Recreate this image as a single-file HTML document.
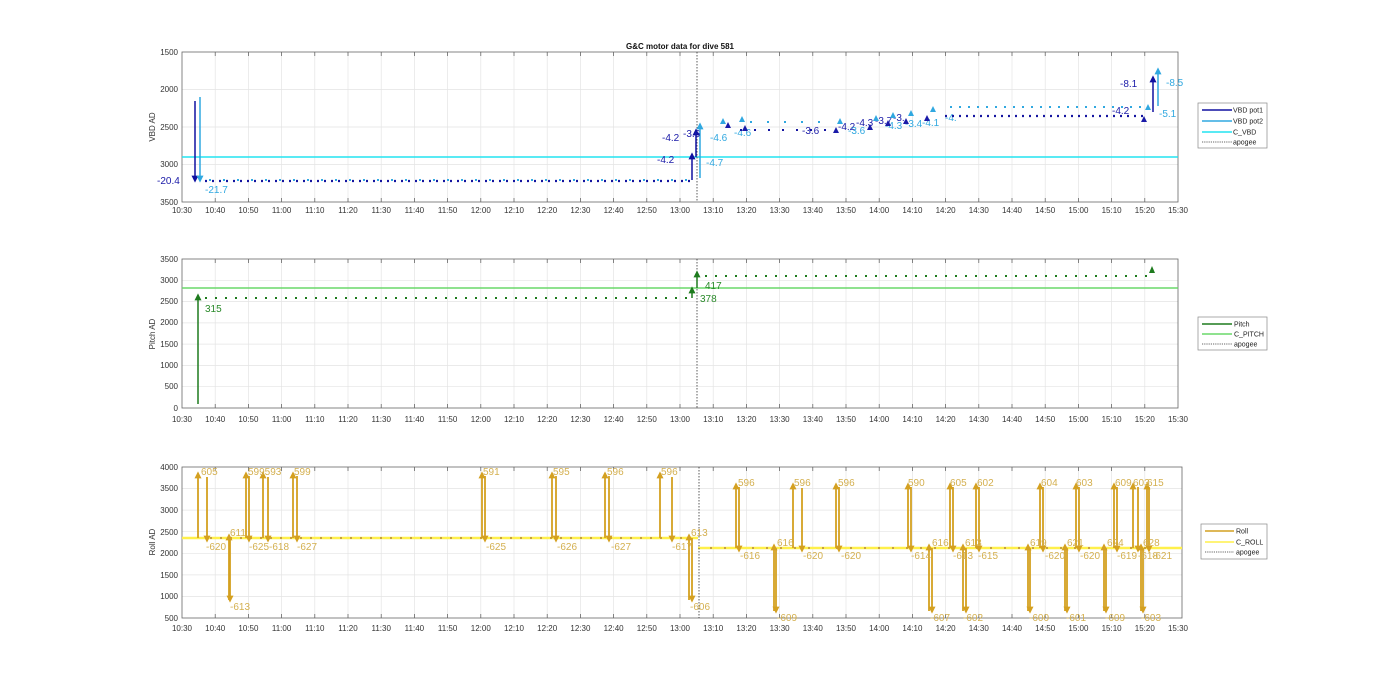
<!DOCTYPE html>
<html><head><meta charset="utf-8"><style>
html,body{margin:0;padding:0;background:#fff;}
svg{display:block;font-family:"Liberation Sans",Arial,sans-serif;}
</style></head><body>
<svg width="1400" height="693" viewBox="0 0 1400 693" xmlns="http://www.w3.org/2000/svg">
<defs>
<marker id="mdb" markerUnits="userSpaceOnUse" markerWidth="7" markerHeight="7" refX="5" refY="4" orient="auto-start-reverse" viewBox="0 0 8 8"><path d="M0,0 L8,4 L0,8Z" fill="#1010a0"/></marker>
<marker id="mlb" markerUnits="userSpaceOnUse" markerWidth="7" markerHeight="7" refX="5" refY="4" orient="auto-start-reverse" viewBox="0 0 8 8"><path d="M0,0 L8,4 L0,8Z" fill="#30a8e0"/></marker>
<marker id="mg" markerUnits="userSpaceOnUse" markerWidth="7" markerHeight="7" refX="5" refY="4" orient="auto-start-reverse" viewBox="0 0 8 8"><path d="M0,0 L8,4 L0,8Z" fill="#1e7b1e"/></marker>
<marker id="mo" markerUnits="userSpaceOnUse" markerWidth="7" markerHeight="7" refX="5" refY="4" orient="auto-start-reverse" viewBox="0 0 8 8"><path d="M0,0 L8,4 L0,8Z" fill="#d4a020"/></marker>
<g id="xl" font-size="8" fill="#333" text-anchor="middle">
<text x="182" y="0">10:30</text><text x="215.2" y="0">10:40</text><text x="248.4" y="0">10:50</text><text x="281.6" y="0">11:00</text><text x="314.8" y="0">11:10</text><text x="348" y="0">11:20</text><text x="381.2" y="0">11:30</text><text x="414.4" y="0">11:40</text><text x="447.6" y="0">11:50</text><text x="480.8" y="0">12:00</text><text x="514" y="0">12:10</text><text x="547.2" y="0">12:20</text><text x="580.4" y="0">12:30</text><text x="613.6" y="0">12:40</text><text x="646.8" y="0">12:50</text><text x="680" y="0">13:00</text><text x="713.2" y="0">13:10</text><text x="746.4" y="0">13:20</text><text x="779.6" y="0">13:30</text><text x="812.8" y="0">13:40</text><text x="846" y="0">13:50</text><text x="879.2" y="0">14:00</text><text x="912.4" y="0">14:10</text><text x="945.6" y="0">14:20</text><text x="978.8" y="0">14:30</text><text x="1012" y="0">14:40</text><text x="1045.2" y="0">14:50</text><text x="1078.4" y="0">15:00</text><text x="1111.6" y="0">15:10</text><text x="1144.8" y="0">15:20</text><text x="1178" y="0">15:30</text>
</g>
<path id="vg" d="M215.2 0v1M248.4 0v1M281.6 0v1M314.8 0v1M348 0v1M381.2 0v1M414.4 0v1M447.6 0v1M480.8 0v1M514 0v1M547.2 0v1M580.4 0v1M613.6 0v1M646.8 0v1M680 0v1M713.2 0v1M746.4 0v1M779.6 0v1M812.8 0v1M846 0v1M879.2 0v1M912.4 0v1M945.6 0v1M978.8 0v1M1012 0v1M1045.2 0v1M1078.4 0v1M1111.6 0v1M1144.8 0v1"/>
</defs>

<text x="680" y="49" font-size="8" font-weight="bold" text-anchor="middle" fill="#111">G&amp;C motor data for dive 581</text>

<!-- ===== Plot 1 ===== -->
<use href="#vg" transform="translate(0,52) scale(1,150)" stroke="#e4e4e4" stroke-width="0.7" vector-effect="non-scaling-stroke"/>
<path d="M182 89.5H1178M182 127H1178M182 164.5H1178" stroke="#e4e4e4" stroke-width="0.7"/>
<use href="#vg" transform="translate(0,52) scale(1,4)" stroke="#555" stroke-width="0.7"/>
<use href="#vg" transform="translate(0,198) scale(1,4)" stroke="#555" stroke-width="0.7"/>
<rect x="182" y="52" width="996" height="150" fill="none" stroke="#666" stroke-width="0.8"/>
<g font-size="8" fill="#333" text-anchor="end">
<text x="178" y="55">1500</text><text x="178" y="92">2000</text><text x="178" y="130">2500</text><text x="178" y="167">3000</text><text x="178" y="205">3500</text></g>
<use href="#xl" transform="translate(0,213)"/>
<text transform="translate(155,127) rotate(-90)" font-size="8" fill="#333" text-anchor="middle">VBD AD</text>
<line x1="182" y1="157" x2="1178" y2="157" stroke="#22e4f0" stroke-width="1.5"/>
<line x1="697" y1="52" x2="697" y2="202" stroke="#333" stroke-width="0.8" stroke-dasharray="1.5 1.5"/>
<line x1="205" y1="181" x2="692" y2="181" stroke="#1515a0" stroke-width="2.2" stroke-dasharray="2 5"/>
<line x1="209" y1="180" x2="692" y2="180" stroke="#30a8e0" stroke-width="2" stroke-dasharray="2 12"/>
<line x1="195" y1="101" x2="195" y2="180" stroke="#1010a0" stroke-width="1.5" marker-end="url(#mdb)"/>
<line x1="200" y1="97" x2="200" y2="180" stroke="#30a8e0" stroke-width="1.5" marker-end="url(#mlb)"/>
<text x="157" y="184" font-size="10" fill="#1a1aa8">-20.4</text>
<text x="205" y="193" font-size="10" fill="#30a8e0">-21.7</text>
<line x1="692" y1="180" x2="692" y2="155" stroke="#1010a0" stroke-width="1.5" marker-end="url(#mdb)"/>
<line x1="696" y1="157" x2="696" y2="131" stroke="#1010a0" stroke-width="1.5" marker-end="url(#mdb)"/>
<line x1="700" y1="178" x2="700" y2="125" stroke="#30a8e0" stroke-width="1.5" marker-end="url(#mlb)"/>
<text x="657" y="163" font-size="10" fill="#1a1aa8">-4.2</text>
<text x="662" y="141" font-size="10" fill="#1a1aa8">-4.2</text>
<text x="683" y="137" font-size="10" fill="#1a1aa8">-3.6</text>
<text x="706" y="166" font-size="10" fill="#30a8e0">-4.7</text>
<text x="710" y="141" font-size="10" fill="#30a8e0">-4.6</text>
<text x="734" y="136" font-size="10" fill="#30a8e0">-4.6</text>
<text x="802" y="134" font-size="10" fill="#1a1aa8">-3.6</text>
<text x="838" y="130" font-size="10" fill="#1a1aa8">-4.2</text>
<text x="848" y="134" font-size="10" fill="#30a8e0">-3.6</text>
<text x="856" y="126" font-size="10" fill="#1a1aa8">-4.3</text>
<text x="875" y="124" font-size="10" fill="#1a1aa8">-3.7</text>
<text x="885" y="129" font-size="10" fill="#30a8e0">-4.3</text>
<text x="893" y="121" font-size="10" fill="#1a1aa8">-3.</text>
<text x="905" y="127" font-size="10" fill="#30a8e0">-3.4</text>
<text x="922" y="126" font-size="10" fill="#30a8e0">-4.1</text>
<text x="945" y="121" font-size="10" fill="#30a8e0">-4.</text>
<g fill="#1a1aa8"><path d="M725 128l3 -6l3 6z M742 131l3 -6l3 6z M833 133l3 -6l3 6z M867 130l3 -6l3 6z M885 126l3 -6l3 6z M903 124l3 -6l3 6z M924 121l3 -6l3 6z M1141 122l3 -6l3 6z"/></g>
<g fill="#30a8e0"><path d="M720 124l3 -6l3 6z M739 122l3 -6l3 6z M837 124l3 -6l3 6z M873 121l3 -6l3 6z M890 118l3 -6l3 6z M908 116l3 -6l3 6z M930 112l3 -6l3 6z M1145 110l3 -6l3 6z"/></g>
<line x1="740" y1="130" x2="830" y2="130" stroke="#1515a0" stroke-width="2" stroke-dasharray="2 12"/>
<line x1="750" y1="122" x2="830" y2="122" stroke="#30a8e0" stroke-width="2" stroke-dasharray="2 15"/>
<line x1="945" y1="116" x2="1145" y2="116" stroke="#1515a0" stroke-width="2.2" stroke-dasharray="2 5"/>
<line x1="950" y1="107" x2="1145" y2="107" stroke="#30a8e0" stroke-width="2" stroke-dasharray="2 7"/>
<line x1="1153" y1="112" x2="1153" y2="78" stroke="#1010a0" stroke-width="1.5" marker-end="url(#mdb)"/>
<line x1="1158" y1="106" x2="1158" y2="70" stroke="#30a8e0" stroke-width="1.5" marker-end="url(#mlb)"/>
<text x="1120" y="87" font-size="10" fill="#1a1aa8">-8.1</text>
<text x="1166" y="86" font-size="10" fill="#30a8e0">-8.5</text>
<text x="1159" y="117" font-size="10" fill="#30a8e0">-5.1</text>
<text x="1112" y="114" font-size="10" fill="#1a1aa8">-4.2</text>
<rect x="1198" y="103" width="69" height="45" fill="#fff" stroke="#888" stroke-width="0.7"/>
<g font-size="7" fill="#222">
<line x1="1202" y1="110" x2="1232" y2="110" stroke="#1010a0" stroke-width="1.5"/><text x="1233" y="112.5">VBD pot1</text>
<line x1="1202" y1="121" x2="1232" y2="121" stroke="#30a8e0" stroke-width="1.5"/><text x="1233" y="123.5">VBD pot2</text>
<line x1="1202" y1="132" x2="1232" y2="132" stroke="#22e4f0" stroke-width="1.5"/><text x="1233" y="134.5">C_VBD</text>
<line x1="1202" y1="142" x2="1232" y2="142" stroke="#333" stroke-width="0.7" stroke-dasharray="1.2 1"/><text x="1233" y="144.5">apogee</text></g>

<!-- ===== Plot 2 ===== -->
<use href="#vg" transform="translate(0,259) scale(1,149)" stroke="#e4e4e4" stroke-width="0.7" vector-effect="non-scaling-stroke"/>
<path d="M182 386.7H1178M182 365.4H1178M182 344.1H1178M182 322.9H1178M182 301.6H1178M182 280.3H1178" stroke="#e4e4e4" stroke-width="0.7"/>
<use href="#vg" transform="translate(0,259) scale(1,4)" stroke="#555" stroke-width="0.7"/>
<use href="#vg" transform="translate(0,404) scale(1,4)" stroke="#555" stroke-width="0.7"/>
<rect x="182" y="259" width="996" height="149" fill="none" stroke="#666" stroke-width="0.8"/>
<g font-size="8" fill="#333" text-anchor="end">
<text x="178" y="262">3500</text><text x="178" y="283">3000</text><text x="178" y="304">2500</text><text x="178" y="325">2000</text><text x="178" y="347">1500</text><text x="178" y="368">1000</text><text x="178" y="389">500</text><text x="178" y="411">0</text></g>
<use href="#xl" transform="translate(0,422)"/>
<text transform="translate(155,334) rotate(-90)" font-size="8" fill="#333" text-anchor="middle">Pitch AD</text>
<line x1="182" y1="288" x2="1178" y2="288" stroke="#6ad86a" stroke-width="1.5"/>
<line x1="697" y1="259" x2="697" y2="408" stroke="#333" stroke-width="0.8" stroke-dasharray="1.5 1.5"/>
<line x1="205" y1="298" x2="690" y2="298" stroke="#1e7b1e" stroke-width="2" stroke-dasharray="2 8"/>
<line x1="705" y1="276" x2="1150" y2="276" stroke="#1e7b1e" stroke-width="2" stroke-dasharray="2 8"/>
<line x1="198" y1="404" x2="198" y2="296" stroke="#1e7b1e" stroke-width="1.5" marker-end="url(#mg)"/>
<line x1="692" y1="298" x2="692" y2="289" stroke="#1e7b1e" stroke-width="1.5" marker-end="url(#mg)"/>
<line x1="697" y1="288" x2="697" y2="273" stroke="#1e7b1e" stroke-width="1.5" marker-end="url(#mg)"/>
<path d="M1149 273l3 -7l3 7z" fill="#1e7b1e"/>
<text x="205" y="312" font-size="10" fill="#2a8a2a">315</text>
<text x="700" y="302" font-size="10" fill="#2a8a2a">378</text>
<text x="705" y="289" font-size="10" fill="#2a8a2a">417</text>
<rect x="1198" y="317" width="69" height="33" fill="#fff" stroke="#888" stroke-width="0.7"/>
<g font-size="7" fill="#222">
<line x1="1202" y1="324" x2="1232" y2="324" stroke="#1e7b1e" stroke-width="1.5"/><text x="1234" y="326.5">Pitch</text>
<line x1="1202" y1="334" x2="1232" y2="334" stroke="#6ad86a" stroke-width="1.5"/><text x="1234" y="336.5">C_PITCH</text>
<line x1="1202" y1="344" x2="1232" y2="344" stroke="#333" stroke-width="0.7" stroke-dasharray="1.2 1"/><text x="1234" y="346.5">apogee</text></g>

<!-- ===== Plot 3 ===== -->
<use href="#vg" transform="translate(0,467) scale(1,151)" stroke="#e4e4e4" stroke-width="0.7" vector-effect="non-scaling-stroke"/>
<path d="M182 596.4H1182M182 574.9H1182M182 553.3H1182M182 531.7H1182M182 510.1H1182M182 488.6H1182" stroke="#e4e4e4" stroke-width="0.7"/>
<use href="#vg" transform="translate(0,467) scale(1,4)" stroke="#555" stroke-width="0.7"/>
<use href="#vg" transform="translate(0,614) scale(1,4)" stroke="#555" stroke-width="0.7"/>
<rect x="182" y="467" width="1000" height="151" fill="none" stroke="#666" stroke-width="0.8"/>
<g font-size="8" fill="#333" text-anchor="end">
<text x="178" y="470">4000</text><text x="178" y="491">3500</text><text x="178" y="513">3000</text><text x="178" y="535">2500</text><text x="178" y="556">2000</text><text x="178" y="578">1500</text><text x="178" y="599">1000</text><text x="178" y="621">500</text></g>
<use href="#xl" transform="translate(0,631)"/>
<text transform="translate(155,542) rotate(-90)" font-size="8" fill="#333" text-anchor="middle">Roll AD</text>
<line x1="182" y1="538" x2="698" y2="538" stroke="#fff04a" stroke-width="2.5"/>
<line x1="698" y1="548" x2="1182" y2="548" stroke="#fff04a" stroke-width="2.5"/>
<line x1="699" y1="467" x2="699" y2="618" stroke="#333" stroke-width="0.8" stroke-dasharray="1.5 1.5"/>
<line x1="210" y1="538" x2="690" y2="538" stroke="#c8a040" stroke-width="2" stroke-dasharray="2 8"/>
<line x1="710" y1="548" x2="1150" y2="548" stroke="#c8a040" stroke-width="2" stroke-dasharray="2 12"/>
<g stroke="#d4a020" stroke-width="1.8" fill="none">
<path d="M198 538V474" marker-end="url(#mo)"/><path d="M207 477V540" marker-end="url(#mo)"/>
<path d="M229 600V536" marker-end="url(#mo)"/><path d="M230 538V600" marker-end="url(#mo)"/>
<path d="M246 538V474" marker-end="url(#mo)"/><path d="M249 476V540" marker-end="url(#mo)"/>
<path d="M263 538V474" marker-end="url(#mo)"/><path d="M268 477V540" marker-end="url(#mo)"/>
<path d="M293 538V474" marker-end="url(#mo)"/><path d="M297 476V540" marker-end="url(#mo)"/>
<path d="M482 538V474" marker-end="url(#mo)"/><path d="M485 476V540" marker-end="url(#mo)"/>
<path d="M552 538V474" marker-end="url(#mo)"/><path d="M556 476V540" marker-end="url(#mo)"/>
<path d="M605 538V474" marker-end="url(#mo)"/><path d="M609 476V540" marker-end="url(#mo)"/>
<path d="M660 538V474" marker-end="url(#mo)"/><path d="M672 477V540" marker-end="url(#mo)"/>
<path d="M689 600V536" marker-end="url(#mo)"/><path d="M692 538V600" marker-end="url(#mo)"/>
<path d="M736 548V485" marker-end="url(#mo)"/><path d="M739 487V550" marker-end="url(#mo)"/>
<path d="M774 611V546" marker-end="url(#mo)"/><path d="M776 548V611" marker-end="url(#mo)"/>
<path d="M793 548V485" marker-end="url(#mo)"/><path d="M802 488V550" marker-end="url(#mo)"/>
<path d="M836 548V485" marker-end="url(#mo)"/><path d="M839 487V550" marker-end="url(#mo)"/>
<path d="M908 548V485" marker-end="url(#mo)"/><path d="M911 487V550" marker-end="url(#mo)"/>
<path d="M929 611V546" marker-end="url(#mo)"/><path d="M932 548V611" marker-end="url(#mo)"/>
<path d="M950 548V485" marker-end="url(#mo)"/><path d="M953 487V550" marker-end="url(#mo)"/>
<path d="M963 611V546" marker-end="url(#mo)"/><path d="M966 548V611" marker-end="url(#mo)"/>
<path d="M976 548V485" marker-end="url(#mo)"/><path d="M979 487V550" marker-end="url(#mo)"/>
<path d="M1028 611V546" marker-end="url(#mo)"/><path d="M1030 548V611" marker-end="url(#mo)"/>
<path d="M1040 548V485" marker-end="url(#mo)"/><path d="M1043 487V550" marker-end="url(#mo)"/>
<path d="M1065 611V546" marker-end="url(#mo)"/><path d="M1067 548V611" marker-end="url(#mo)"/>
<path d="M1076 548V485" marker-end="url(#mo)"/><path d="M1079 487V550" marker-end="url(#mo)"/>
<path d="M1104 611V546" marker-end="url(#mo)"/><path d="M1106 548V611" marker-end="url(#mo)"/>
<path d="M1114 548V485" marker-end="url(#mo)"/><path d="M1117 487V550" marker-end="url(#mo)"/>
<path d="M1133 548V485" marker-end="url(#mo)"/><path d="M1138 487V550" marker-end="url(#mo)"/>
<path d="M1141 611V546" marker-end="url(#mo)"/><path d="M1143 548V611" marker-end="url(#mo)"/>
<path d="M1147 548V485" marker-end="url(#mo)"/><path d="M1149 487V550" marker-end="url(#mo)"/>
</g>
<g font-size="10" fill="#d4b050">
<text x="201" y="475">605</text><text x="206" y="550">-620</text><text x="230" y="536">611</text><text x="230" y="610">-613</text>
<text x="248" y="475">599593</text><text x="249" y="550">-625-618</text><text x="294" y="475">599</text><text x="297" y="550">-627</text>
<text x="483" y="475">591</text><text x="486" y="550">-625</text><text x="553" y="475">595</text><text x="557" y="550">-626</text>
<text x="607" y="475">596</text><text x="611" y="550">-627</text><text x="661" y="475">596</text><text x="672" y="550">-617</text>
<text x="691" y="536">613</text><text x="690" y="610">-606</text>
<text x="738" y="486">596</text><text x="740" y="559">-616</text><text x="777" y="546">616</text><text x="777" y="621">-609</text>
<text x="794" y="486">596</text><text x="803" y="559">-620</text><text x="838" y="486">596</text><text x="841" y="559">-620</text>
<text x="908" y="486">590</text><text x="911" y="559">-614</text><text x="932" y="546">616</text><text x="930" y="621">-607</text>
<text x="950" y="486">605</text><text x="953" y="559">-613</text><text x="965" y="546">613</text><text x="963" y="621">-602</text>
<text x="977" y="486">602</text><text x="978" y="559">-615</text><text x="1030" y="546">619</text><text x="1029" y="621">-600</text>
<text x="1041" y="486">604</text><text x="1045" y="559">-620</text><text x="1067" y="546">621</text><text x="1066" y="621">-601</text>
<text x="1076" y="486">603</text><text x="1080" y="559">-620</text><text x="1107" y="546">624</text><text x="1105" y="621">-609</text>
<text x="1115" y="486">609</text><text x="1117" y="559">-619</text><text x="1133" y="486">603</text><text x="1138" y="559">-618</text>
<text x="1143" y="546">628</text><text x="1141" y="621">-603</text><text x="1147" y="486">615</text><text x="1152" y="559">-621</text>
</g>
<rect x="1201" y="524" width="66" height="35" fill="#fff" stroke="#888" stroke-width="0.7"/>
<g font-size="7" fill="#222">
<line x1="1205" y1="531" x2="1234" y2="531" stroke="#d4a020" stroke-width="1.5"/><text x="1236" y="533.5">Roll</text>
<line x1="1205" y1="542" x2="1234" y2="542" stroke="#fff04a" stroke-width="1.5"/><text x="1236" y="544.5">C_ROLL</text>
<line x1="1205" y1="552" x2="1234" y2="552" stroke="#333" stroke-width="0.7" stroke-dasharray="1.2 1"/><text x="1236" y="554.5">apogee</text></g>
</svg>
</body></html>
